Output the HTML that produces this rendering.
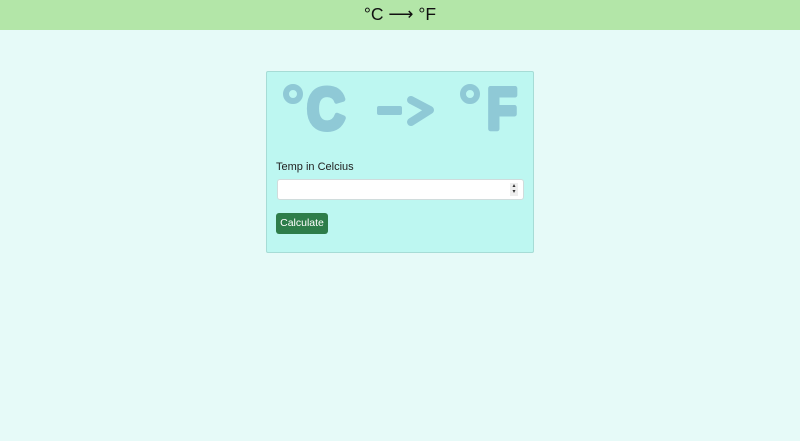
<!DOCTYPE html>
<html><head><meta charset="utf-8"><style>
html,body{margin:0;padding:0}
body{width:800px;height:441px;background:#e6faf8;font-family:"Liberation Sans",sans-serif;overflow:hidden;position:relative}
.hdr{position:absolute;left:0;top:0;width:800px;height:30px;background:#b3e6a8;text-align:center;font-size:17.5px;line-height:28px;color:#111}
.card{position:absolute;left:266px;top:71px;width:266px;height:180px;background:#bdf7f1;border:1px solid #a6dcd6;border-radius:2px}
.lbl{position:absolute;left:9px;top:89px;font-size:11px;color:#222}
.inp{position:absolute;left:10px;top:107px;width:245px;height:19px;background:#fff;border:1px solid #d0dcdc;border-radius:3px}
.spin{position:absolute;right:5px;top:3px;width:8px;height:13px;background:#eee;font-size:6px;line-height:6px;text-align:center;color:#333}
.btn{position:absolute;left:9px;top:141px;width:52px;height:21px;background:#2e7d4a;border-radius:3px;color:#fff;font-size:10.5px;line-height:21px;text-align:center}
</style></head><body>
<div class="hdr">°C ⟶ °F</div>
<div class="card">
<svg width="266" height="70" style="position:absolute;left:0;top:0">
<g fill="#8fc9d6" stroke="#8fc9d6" stroke-width="5" stroke-linejoin="round" font-family="Liberation Sans, sans-serif" font-weight="bold">
<circle cx="26" cy="22" r="7" fill="none" stroke-width="6"/>
<text x="40" y="57" font-size="58" textLength="38" lengthAdjust="spacingAndGlyphs">C</text>
<rect x="110" y="34" width="25" height="9" rx="2" stroke="none"/>
<path d="M144 28 L163 38 L144 50" fill="none" stroke-width="8" stroke-linecap="round"/>
<circle cx="203" cy="22" r="7" fill="none" stroke-width="6"/>
<text x="220" y="57" font-size="58" textLength="30" lengthAdjust="spacingAndGlyphs">F</text>
</g></svg>
<div class="lbl">Temp in Celcius</div>
<div class="inp"><div class="spin">▴<br>▾</div></div>
<div class="btn">Calculate</div>
</div>
</body></html>
